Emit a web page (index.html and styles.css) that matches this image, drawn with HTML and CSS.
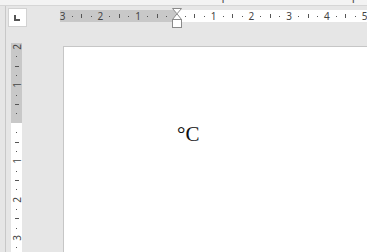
FILE: index.html
```html
<!DOCTYPE html>
<html>
<head>
<title>Document</title>
<meta charset="UTF-8">
<link rel="stylesheet" href="styles.css">
</head>
<body>
<div id="ribbon">
	<span class="rb rb1">ˈ</span>
	<span class="rb rb2">Интервал</span>
	<span class="rb rb3">ˈ</span>
	<span class="rb rb4">При</span>
</div>

<div id="main">
	<div class="corner">
		<div class="tab_toggle"><span class="tab_l"></span></div>
	</div>

	<div class="hcell">
		<div id="hruler">
			<div class="hticks">
				<span class="n">3</span><span class="d"></span><span class="l"></span><span class="d"></span>
				<span class="n">2</span><span class="d"></span><span class="l"></span><span class="d"></span>
				<span class="n">1</span><span class="d"></span><span class="l"></span><span class="d"></span>
				<span class="z"></span><span class="d"></span><span class="l"></span><span class="d"></span>
				<span class="n">1</span><span class="d"></span><span class="l"></span><span class="d"></span>
				<span class="n">2</span><span class="d"></span><span class="l"></span><span class="d"></span>
				<span class="n">3</span><span class="d"></span><span class="l"></span><span class="d"></span>
				<span class="n">4</span><span class="d"></span><span class="l"></span><span class="d"></span>
				<span class="n">5</span><span class="d"></span><span class="l"></span><span class="d"></span>
			</div>
			<!-- indent marker -->
			<svg class="indent" width="11" height="21" viewBox="0 0 11 21">
				<path d="M0.5 0.5 H9.5 L5 5.8 L9.5 11.5 H0.5 L5 5.8 Z" fill="#fff" stroke="#8a8a8a"/>
				<rect x="0.5" y="11.5" width="9" height="8" fill="#fff" stroke="#8a8a8a"/>
			</svg>
		</div>
	</div>

	<div class="vcell">
		<div id="vruler">
			<div class="vticks">
				<span class="n"><i>2</i></span><span class="d"></span><span class="l"></span><span class="d"></span>
				<span class="n"><i>1</i></span><span class="d"></span><span class="l"></span><span class="d"></span>
				<span class="z"></span><span class="d"></span><span class="l"></span><span class="d"></span>
				<span class="n"><i>1</i></span><span class="d"></span><span class="l"></span><span class="d"></span>
				<span class="n"><i>2</i></span><span class="d"></span><span class="l"></span><span class="d"></span>
				<span class="n"><i>3</i></span><span class="d"></span><span class="l"></span><span class="d"></span>
				<span class="n"><i>4</i></span>
			</div>
		</div>
	</div>

	<div class="page">
		<p class="text">°C</p>
	</div>
</div>
</body>
</html>
```

FILE: styles.css
```css
html, body {
	margin: 0;
	height: 100%;
}

body {
	background-color: #e6e6e6;
	overflow: hidden;
	display: flex;
	flex-direction: column;
	font-family: "Noto Sans", "DejaVu Sans", sans-serif;
}

/**************************
/******TOP STRIP
/**/
#ribbon {
	position: relative;
	height: 5px;
	background-color: #f3f3f3;
	border-bottom: 1px solid #d6d6d6;
	overflow: hidden;
	flex: none;
}

.rb {
	position: absolute;
	top: -12px;
	font-size: 12px;
	line-height: 15px;
	color: #555;
}
.rb1 { left: 109px; }
.rb2 { left: 193px; }
.rb3 { left: 330px; }
.rb4 { left: 343px; }

/**************************
/******MAIN AREA
/**/
#main {
	flex: 1;
	margin-left: 5px;
	border-left: 1px solid #c8c8c8;
	display: grid;
	grid-template-columns: 57px 1fr;
	grid-template-rows: 40px 1fr;
	min-height: 0;
}

.corner {
	padding: 2px 0 0 2px;
}

.tab_toggle {
	width: 17px;
	height: 17px;
	background-color: #fff;
	border: 1px solid #d2d2d2;
	position: relative;
}

.tab_l {
	position: absolute;
	left: 5px;
	top: 6px;
	width: 4px;
	height: 4px;
	border-left: 2px solid #555;
	border-bottom: 2px solid #555;
}

.hcell {
	padding-top: 4px;
	margin-left: -3px;
	min-width: 0;
}

#hruler {
	position: relative;
	height: 12px;
	background: linear-gradient(to right, #c8c8c8 116px, #fff 116px);
	overflow: visible;
}

.hticks {
	display: flex;
	height: 12px;
	margin-left: -2px;
	overflow: hidden;
}

.hticks span {
	flex: 0 0 9.45px;
	display: flex;
	align-items: center;
	justify-content: center;
}

.hticks .n {
	font-size: 10px;
	line-height: 12px;
	color: #444;
}

.hticks .d::after {
	content: "";
	width: 1px;
	height: 1px;
	background-color: #555;
}

.hticks .l::after {
	content: "";
	width: 1px;
	height: 4px;
	background-color: #555;
}

.indent {
	position: absolute;
	left: 112px;
	top: -2px;
}

.vcell {
	grid-row: 2;
	grid-column: 1;
	padding-left: 5px;
	margin-top: -3px;
	min-height: 0;
	overflow: hidden;
}

#vruler {
	width: 11px;
	height: 100%;
	background: linear-gradient(to bottom, #c8c8c8 80px, #fff 80px);
	overflow: hidden;
}

.vticks {
	display: flex;
	flex-direction: column;
	margin-top: -1px;
}

.vticks span {
	flex: 0 0 9.45px;
	display: flex;
	align-items: center;
	justify-content: center;
}

.vticks .n i {
	font-style: normal;
	font-size: 10px;
	line-height: 10px;
	color: #444;
	transform: rotate(-90deg);
}

.vticks .d::after {
	content: "";
	width: 1px;
	height: 1px;
	background-color: #555;
}

.vticks .l::after {
	content: "";
	width: 4px;
	height: 1px;
	background-color: #555;
}

/**************************
/******PAGE
/**/
.page {
	grid-row: 2;
	grid-column: 2;
	background-color: #fff;
	border-top: 1px solid #c6c6c6;
	border-left: 1px solid #c6c6c6;
	padding: 75px 0 0 113px;
}

.text {
	margin: 0;
	font-family: "Liberation Serif", serif;
	font-size: 21px;
	color: #111;
}
```
